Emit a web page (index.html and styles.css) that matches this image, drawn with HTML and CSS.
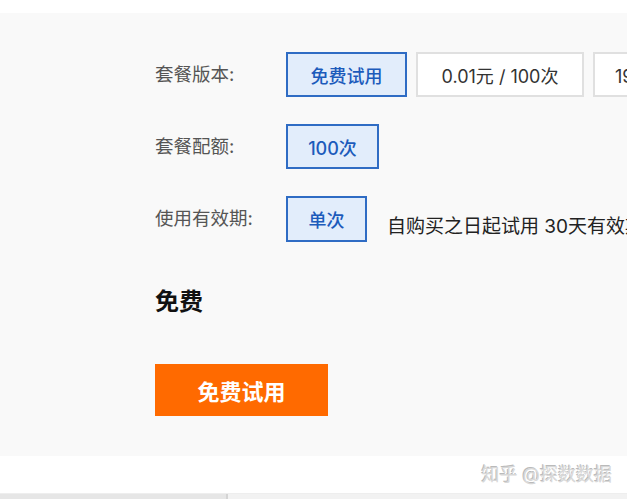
FILE: index.html
```html
<!DOCTYPE html>
<html lang="zh-CN">
<head>
    <meta charset="UTF-8">
    <meta name="viewport" content="width=device-width, initial-scale=1.0">
    <title>套餐购买</title>
    <link rel="stylesheet" href="styles.css">
</head>
<body>
    <div class="panel">
        <div class="option-row">
            <div class="option-label">套餐版本:</div>
            <div class="option-list">
                <span class="option active">免费试用</span>
                <span class="option">0.01元 / 100次</span>
                <span class="option">19.9元 / 1000次</span>
            </div>
        </div>

        <div class="option-row">
            <div class="option-label">套餐配额:</div>
            <div class="option-list">
                <span class="option active option-narrow">100次</span>
            </div>
        </div>

        <div class="option-row">
            <div class="option-label">使用有效期:</div>
            <div class="option-list">
                <span class="option active option-small">单次</span>
                <span class="option-note">自购买之日起试用 30天有效期</span>
            </div>
        </div>

        <div class="price">免费</div>

        <button class="buy-btn">免费试用</button>
    </div>

    <div class="footer">
        <span class="watermark">知乎 @探数数据</span>
    </div>
    <div class="bottom-bar">
        <span class="bottom-tab"></span>
    </div>
</body>
</html>
```

FILE: styles.css
```css
* {
    margin: 0;
    padding: 0;
    box-sizing: border-box;
    font-family: Inter, "Noto Sans CJK SC", sans-serif;
}

body {
    width: 627px;
    height: 500px;
    overflow: hidden;
    background: #fff;
}

.panel {
    margin-top: 13px;
    height: 443px;
    background: #f9f9f9;
    padding: 39px 0 0 155px;
    overflow: hidden;
}

.option-row {
    display: flex;
    align-items: center;
    height: 45px;
    margin-bottom: 27px;
}

.option-label {
    width: 131px;
    flex-shrink: 0;
    font-size: 18.5px;
    color: #555;
    margin-top: -4px;
}

.option-list {
    display: flex;
    align-items: center;
    gap: 9px;
    white-space: nowrap;
}

.option {
    display: flex;
    align-items: center;
    justify-content: center;
    height: 45px;
    padding: 0 20px;
    background: #fff;
    border: 2px solid #e0e0e0;
    color: #333;
    font-size: 18px;
}

.option.active {
    background: #e2edfb;
    border-color: #2f6cc4;
    color: #1c5bbb;
    font-weight: 500;
    width: 121px;
    padding: 0;
}

.option:nth-child(2) {
    width: 168px;
}

.option.option-narrow {
    width: 93px;
}

.option.option-small {
    width: 81px;
    height: 46px;
}

.option-note {
    margin-left: 11px;
    margin-top: 12px;
    font-size: 19px;
    color: #222;
}

/* the row above has margin-bottom 27px, these margins collapse */
.price {
    margin-top: 44px;
    font-size: 24px;
    font-weight: 700;
    color: #111;
    line-height: 34px;
}

.buy-btn {
    margin-top: 45px;
    width: 173px;
    height: 52px;
    background: #ff6a00;
    border: none;
    color: #fff;
    font-size: 22px;
    font-weight: 700;
    cursor: pointer;
}

.footer {
    position: relative;
    height: 38px;
    border-bottom: 1px solid #eee;
}

.watermark {
    position: absolute;
    right: 15px;
    top: 4px;
    font-size: 18px;
    color: #cfcfcf;
    text-shadow: 1px 1px 0 #fff, -1px -1px 0 #aaa;
    opacity: 0.8;
}

.bottom-bar {
    height: 5px;
    background: #e6e6e6;
    padding-left: 226px;
}

.bottom-tab {
    display: block;
    height: 5px;
    border-left: 2px solid #d4d4d4;
    background: #f2f2f2;
}
```
